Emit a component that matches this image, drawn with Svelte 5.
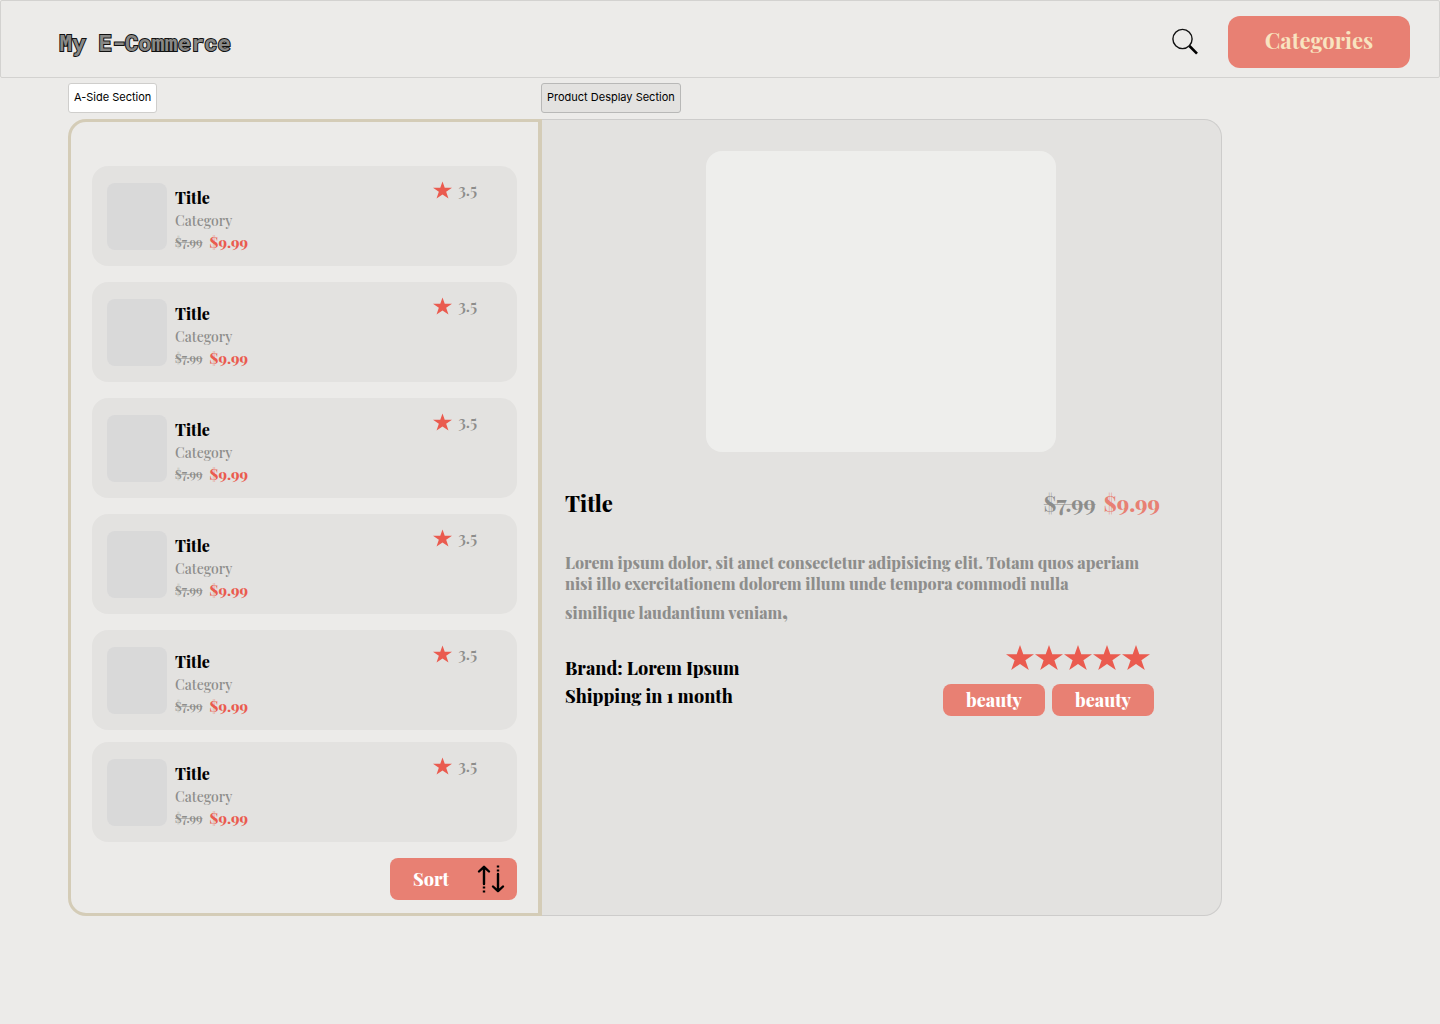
<script>
  const products = Array.from({ length: 6 }, (_, id) => ({
    id,
    title: 'Title',
    category: 'Category',
    oldPrice: '$7.99',
    price: '$9.99',
    rating: '3.5'
  }));
  const tags = ['beauty', 'beauty'];
</script>

{#snippet star()}
  <svg class="star" viewBox="0 0 28 25" aria-hidden="true">
    <path d="M14 0 17.3 9.2H28L19.4 15.2 22.8 25 14 19 5.2 25 8.6 15.2 0 9.2H10.7Z" />
  </svg>
{/snippet}

<header>
  <h1>My E-Commerce</h1>
  <nav>
    <button class="search" aria-label="Search">
      <svg viewBox="0 0 30 30" aria-hidden="true">
        <circle cx="12.5" cy="12" r="9.6" fill="none" stroke="#111" stroke-width="1.4" />
        <path d="M19.5 19 27 26.7" stroke="#000" stroke-width="2.6" />
      </svg>
    </button>
    <button class="categories">Categories</button>
  </nav>
</header>

<main>
  <span class="label light">A-Side Section</span>
  <span class="label">Product Desplay Section</span>

  <aside>
    <ul>
      {#each products as product (product.id)}
        <li class="card">
          <div class="thumb"></div>
          <div class="info">
            <h3>{product.title}</h3>
            <p class="category">{product.category}</p>
            <p class="prices"><s>{product.oldPrice}</s><strong>{product.price}</strong></p>
          </div>
          <div class="score">{@render star()}<span>{product.rating}</span></div>
        </li>
      {/each}
    </ul>
    <button class="sort">
      Sort
      <svg viewBox="0 0 28 28" aria-hidden="true">
        <g fill="none" stroke="#000" stroke-width="2.4" stroke-linecap="round" stroke-linejoin="round">
          <path d="M7 19V2M2 6.5 7 1.8l5 4.7" />
          <path d="M21 9v17M16 21.5l5 4.7 5-4.7" />
        </g>
        <path d="M5.8 21.4h2.4v2.2H5.8zM5.8 25.4h2.4v2.2H5.8zM19.8.4h2.4v2.2h-2.4zM19.8 4.4h2.4v2.2h-2.4z" />
      </svg>
    </button>
  </aside>

  <section class="detail">
    <div class="photo"></div>
    <div class="content">
      <div class="heading">
        <h2>Title</h2>
        <p><s>$7.99</s><strong>$9.99</strong></p>
      </div>
      <p class="description">
        Lorem ipsum dolor, sit amet consectetur adipisicing elit. Totam quos aperiam<br />
        nisi illo exercitationem dolorem illum unde tempora commodi nulla
      </p>
      <p class="description last">similique laudantium veniam<span>,</span></p>
      <div class="meta">
        <div class="facts">
          <p>Brand: Lorem Ipsum</p>
          <p>Shipping in 1 month</p>
        </div>
        <div class="rating">
          <div class="stars" role="img" aria-label="5 out of 5">
            {#each Array(5) as _}{@render star()}{/each}
          </div>
          <div class="tags">
            {#each tags as tag}<button>{tag}</button>{/each}
          </div>
        </div>
      </div>
    </div>
  </section>
</main>

<style>
  :global(body) {
    margin: 0;
    background: #ecebe9;
    color: #000;
    font-family: 'Playfair Display', 'Liberation Serif', serif;
  }
  :global(*) {
    box-sizing: border-box;
  }
  h1, h2, h3, p, ul {
    margin: 0;
    padding: 0;
  }
  h2, h3, strong {
    font-weight: 800;
  }
  s {
    text-decoration-thickness: 1px;
    text-decoration-color: rgba(141, 141, 139, 0.6);
    color: #8d8d8b;
  }
  button {
    border: 0;
    padding: 0;
    font-family: inherit;
    font-weight: 800;
    color: #fff;
    background: #e88073;
    cursor: pointer;
  }
  header {
    display: flex;
    align-items: center;
    justify-content: space-between;
    height: 78px;
    padding: 0 29px 0 58px;
    border: 1px solid #d3d2d0;
    border-radius: 2px;
  }
  h1 {
    padding-top: 8px;
    font-family: 'Roboto Mono', monospace;
    font-size: 22px;
    line-height: 28px;
    color: #888886;
    -webkit-text-stroke: 2px #111;
    paint-order: stroke fill;
  }
  nav {
    display: flex;
    align-items: center;
    gap: 28px;
    padding-top: 6px;
  }
  .search {
    width: 30px;
    height: 30px;
    background: none;
  }
  .search svg {
    display: block;
  }
  .categories {
    width: 182px;
    height: 52px;
    padding-bottom: 4px;
    border-radius: 12px;
    font-size: 22px;
    font-weight: 700;
    color: #f8e4c0;
  }
  main {
    display: grid;
    grid-template-columns: 473px minmax(0, 1fr);
    row-gap: 6px;
    padding: 5px 218px 40px 68px;
  }
  .label {
    justify-self: start;
    padding: 0 5px 2px;
    border: 1px solid #b8b8b7;
    border-radius: 3px;
    background: #e3e2e0;
    font-family: Inter, sans-serif;
    font-size: 11px;
    line-height: 26px;
  }
  .label.light {
    border-color: #cfcecc;
    background: #fff;
  }
  aside {
    position: relative;
    display: flex;
    flex-direction: column;
    margin-right: -1px;
    padding: 44px 21px 13px;
    border: 3px solid #d4ccb7;
    border-right-width: 4px;
    border-radius: 18px 0 0 18px;
  }
  ul {
    list-style: none;
  }
  .card {
    display: flex;
    height: 100px;
    margin-bottom: 16px;
    padding: 17px 40px 0 15px;
    border-radius: 16px;
    background: #e3e2e0;
  }
  .card:nth-last-child(2) {
    margin-bottom: 12px;
  }
  .thumb {
    width: 60px;
    height: 67px;
    border-radius: 8px;
    background: #d9d9d9;
  }
  .info {
    flex: 1;
    padding: 4px 8px 0;
  }
  h3 {
    font-size: 16px;
    line-height: 22px;
  }
  .category {
    font-size: 14px;
    font-weight: 500;
    line-height: 24px;
    color: #8d8d8b;
  }
  .prices {
    display: flex;
    align-items: center;
    gap: 7px;
    font-size: 15px;
    line-height: 18px;
    color: #ea5b4f;
  }
  .prices s {
    font-size: 12px;
    font-weight: 600;
  }
  .score {
    display: flex;
    align-items: center;
    gap: 6px;
    height: 14px;
    font-size: 16px;
    font-weight: 600;
    color: #8d8d8b;
  }
  .score span {
    padding-bottom: 2px;
  }
  .star {
    display: block;
    width: 28px;
    height: 25px;
    fill: #ea5b4f;
  }
  .score .star {
    width: 19px;
    height: 18px;
  }
  .sort {
    display: flex;
    align-items: center;
    justify-content: space-between;
    align-self: flex-end;
    width: 127px;
    height: 42px;
    padding: 0 12px 0 23px;
    border-radius: 8px;
    font-size: 18px;
  }
  .sort svg {
    width: 28px;
    height: 28px;
  }
  .detail {
    padding-top: 31px;
    border: 1px solid #cdcccb;
    border-left: 0;
    border-radius: 0 18px 18px 0;
    background: #e3e2e0;
  }
  .photo {
    width: 350px;
    height: 301px;
    margin: 0 auto;
    border-radius: 16px;
    background: #eeeeec;
  }
  .content {
    padding: 36px 61px 0 24px;
  }
  .heading {
    display: flex;
    justify-content: space-between;
    font-size: 22px;
    line-height: 30px;
  }
  h2 {
    font-size: 22px;
  }
  .heading p {
    display: flex;
    gap: 8px;
    color: #e88073;
  }
  .heading s {
    font-weight: 700;
  }
  .description {
    margin-top: 34px;
    font-size: 16px;
    font-weight: 800;
    line-height: 21px;
    color: #8d8d8b;
  }
  .description.last {
    margin-top: 8px;
  }
  .description span {
    font-size: 22px;
    line-height: 0;
  }
  .meta {
    display: flex;
    justify-content: space-between;
    margin-top: 21px;
    padding-right: 6px;
  }
  .facts {
    padding-top: 10px;
    font-size: 18px;
    font-weight: 800;
    line-height: 28px;
  }
  .rating {
    padding-top: 1px;
  }
  .stars {
    display: flex;
    justify-content: flex-end;
    gap: 1px;
    padding-right: 4px;
  }
  .tags {
    display: flex;
    gap: 7px;
    margin-top: 14px;
  }
  .tags button {
    width: 102px;
    height: 32px;
    border-radius: 8px;
    font-size: 18px;
  }
</style>
